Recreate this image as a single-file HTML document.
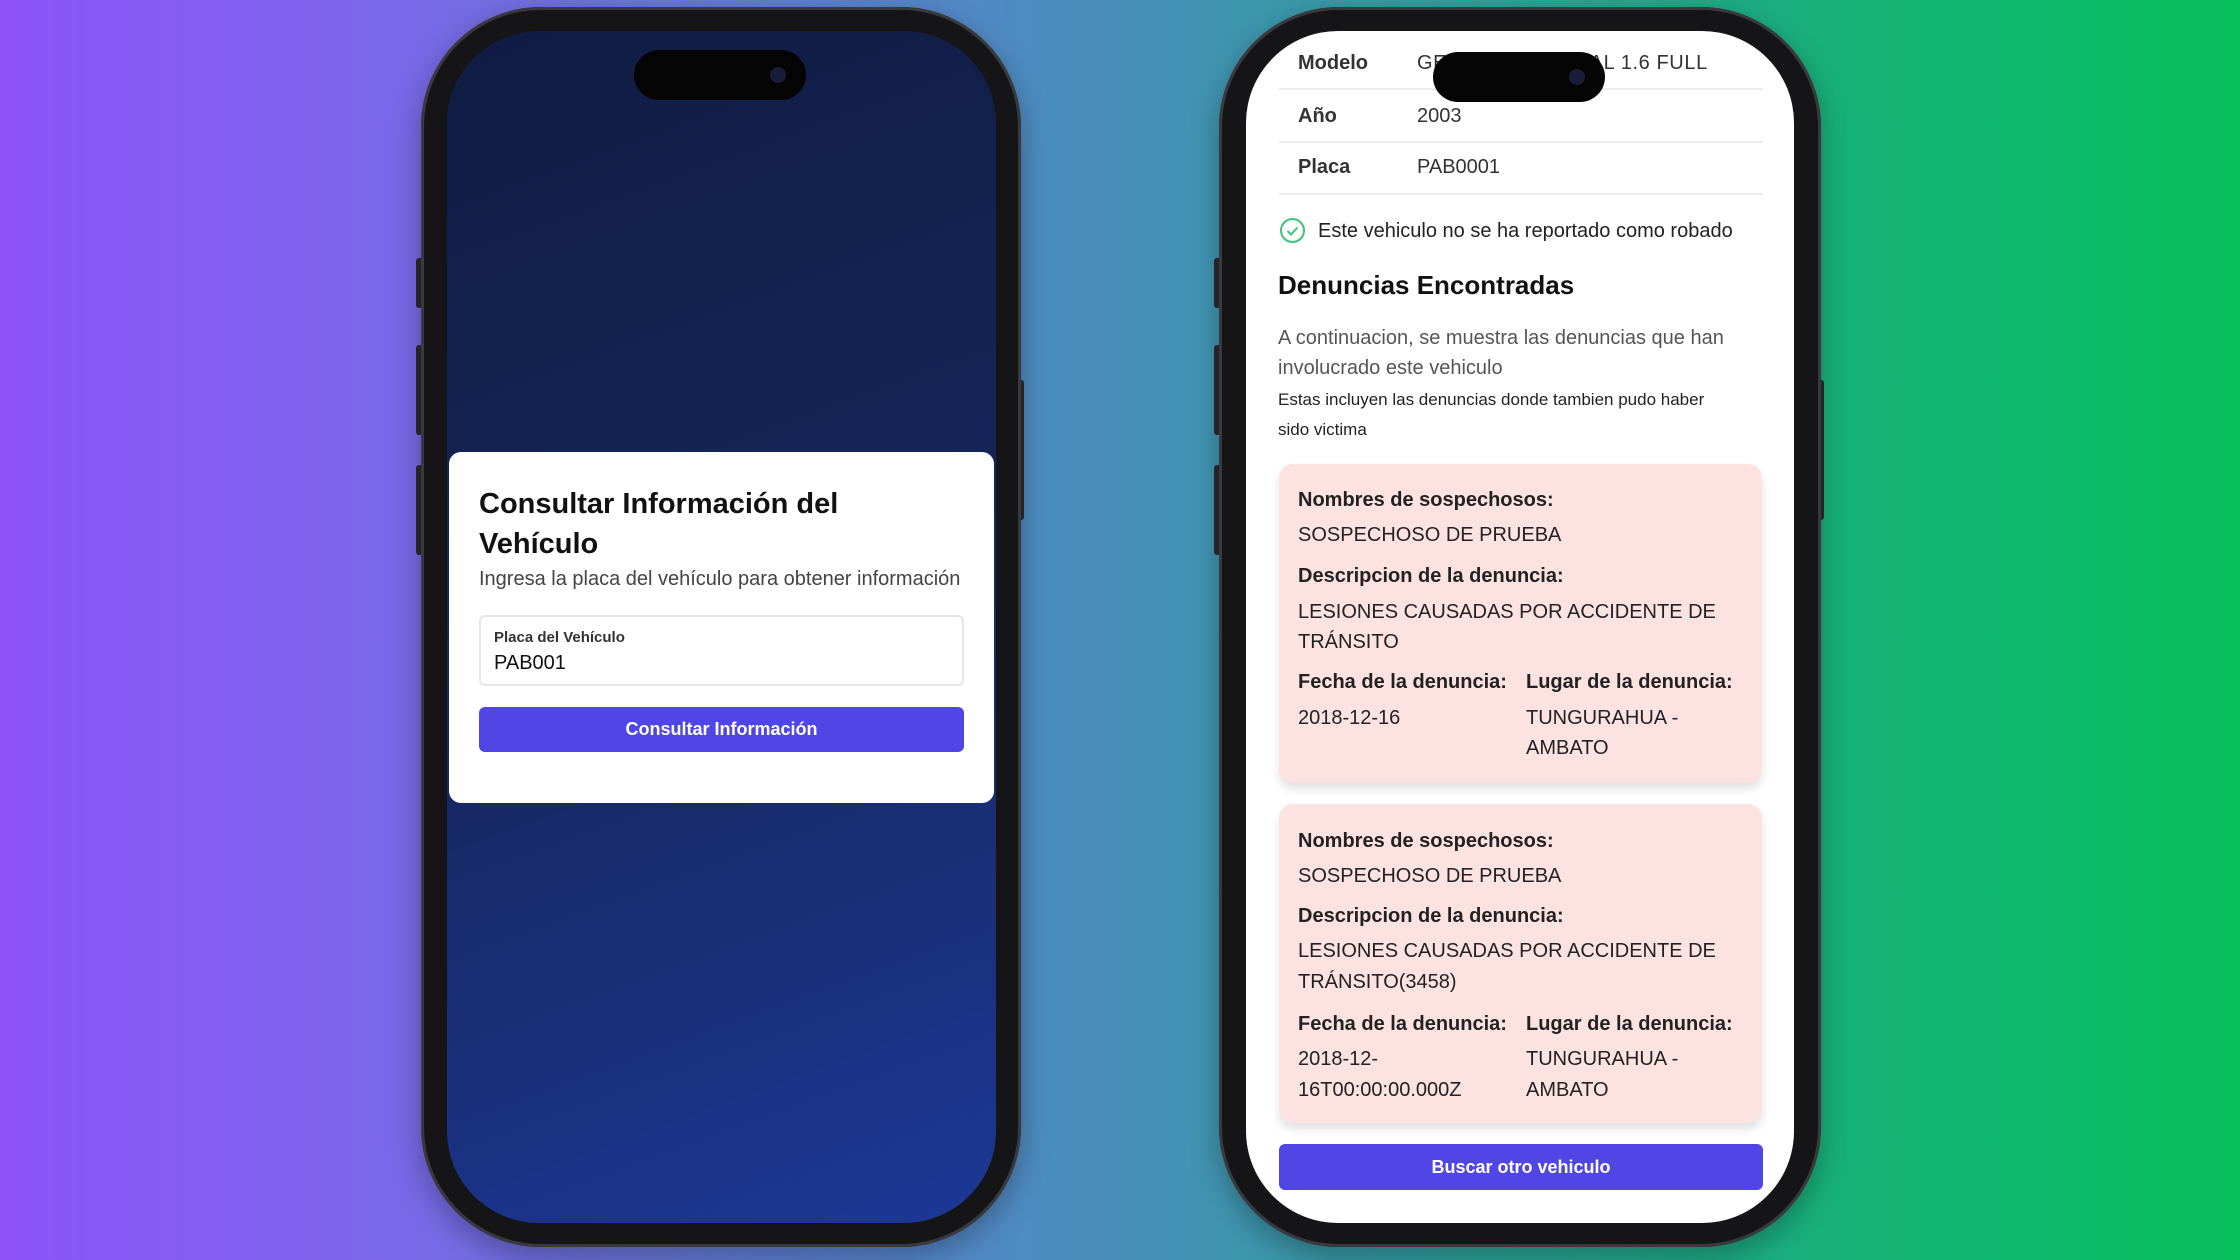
<!DOCTYPE html>
<html><head><meta charset="utf-8"><style>
*{margin:0;padding:0;box-sizing:border-box}
body{width:2240px;height:1260px;overflow:hidden;position:relative;font-family:"Liberation Sans",Arial,sans-serif;
background:linear-gradient(90deg,#8e53fb 0%,#7a68e8 18%,#5a84cf 38%,#4492b6 52%,#2aa496 68%,#14b474 85%,#07bf5c 100%)}
.a{position:absolute;white-space:nowrap}
.phone{position:absolute;border-radius:120px;background:#151517;box-shadow:0 0 0 3px #3a3a3e inset,0 10px 30px rgba(0,0,0,.3)}
.scr{position:absolute;border-radius:92px;overflow:hidden}
.island{position:absolute;width:172px;height:50px;border-radius:25px;background:#050505}
.island i{position:absolute;right:20px;top:17px;width:16px;height:16px;border-radius:50%;background:#1a1d3a}
.btn{position:absolute;background:#4f46e5;color:#fff;font-weight:bold;text-align:center;border-radius:6px}
.lab{font-weight:bold;color:#222;font-size:20px}
.val{color:#222;font-size:20px}
.card{position:absolute;left:1279px;width:483px;background:#fde2e2;border-radius:14px;box-shadow:0 6px 10px rgba(0,0,0,.12)}
.sep{position:absolute;left:1279px;width:484px;height:2px;background:#ececec}
.side{position:absolute;width:7px;background:#2a2a2c;border-radius:3px}
</style></head><body>

<!-- left phone -->
<div class="side" style="left:416px;top:258px;height:50px"></div>
<div class="side" style="left:416px;top:345px;height:90px"></div>
<div class="side" style="left:416px;top:465px;height:90px"></div>
<div class="side" style="left:1017px;top:380px;height:140px"></div>
<div class="phone" style="left:421px;top:7px;width:600px;height:1240px"></div>
<div class="scr" style="left:447px;top:31px;width:549px;height:1192px;background:linear-gradient(160deg,#101c42 0%,#152559 45%,#1d3896 100%)"></div>
<div class="island" style="left:634px;top:50px"><i></i></div>

<div class="a" style="left:449px;top:452px;width:545px;height:351px;background:#fff;border-radius:12px"></div>
<div class="a" style="left:479px;top:484px;font-size:29px;font-weight:bold;color:#111;line-height:40px">Consultar Información del<br>Vehículo</div>
<div class="a" style="left:479px;top:568px;font-size:20px;color:#444">Ingresa la placa del vehículo para obtener información</div>
<div class="a" style="left:479px;top:615px;width:485px;height:71px;border:2px solid #e6e6e6;border-radius:6px"></div>
<div class="a" style="left:494px;top:629px;font-size:15px;font-weight:bold;color:#333">Placa del Vehículo</div>
<div class="a" style="left:494px;top:652px;font-size:20px;color:#111">PAB001</div>
<div class="btn" style="left:479px;top:707px;width:485px;height:45px;line-height:45px;font-size:18px">Consultar Información</div>

<!-- right phone -->
<div class="side" style="left:1214px;top:258px;height:50px"></div>
<div class="side" style="left:1214px;top:345px;height:90px"></div>
<div class="side" style="left:1214px;top:465px;height:90px"></div>
<div class="side" style="left:1817px;top:380px;height:140px"></div>
<div class="phone" style="left:1219px;top:7px;width:602px;height:1240px"></div>
<div class="scr" style="left:1246px;top:31px;width:548px;height:1192px;background:#fff"></div>

<div class="a lab" style="left:1298px;top:52px;color:#333">Modelo</div>
<div class="a val" style="left:1417px;top:52px;color:#333;letter-spacing:0.6px">GENERAL CORDIAL 1.6 FULL</div>
<div class="sep" style="top:88px"></div>
<div class="a lab" style="left:1298px;top:105px;color:#333">Año</div>
<div class="a val" style="left:1417px;top:105px;color:#333">2003</div>
<div class="sep" style="top:141px"></div>
<div class="a lab" style="left:1298px;top:156px;color:#333">Placa</div>
<div class="a val" style="left:1417px;top:156px;color:#333">PAB0001</div>
<div class="sep" style="top:193px"></div>
<div class="island" style="left:1433px;top:52px"><i></i></div>

<svg class="a" style="left:1279px;top:217px" width="27" height="27" viewBox="0 0 27 27"><circle cx="13.5" cy="13.5" r="11.5" fill="none" stroke="#3cc47a" stroke-width="2"/><path d="M8.5 14l3.5 3.5 6.5-7" fill="none" stroke="#3cc47a" stroke-width="2"/></svg>
<div class="a" style="left:1318px;top:220px;font-size:20px;color:#222">Este vehiculo no se ha reportado como robado</div>
<div class="a" style="left:1278px;top:270px;font-size:26px;font-weight:bold;color:#111">Denuncias Encontradas</div>
<div class="a" style="left:1278px;top:323px;font-size:20px;color:#555;line-height:30px">A continuacion, se muestra las denuncias que han<br>involucrado este vehiculo</div>
<div class="a" style="left:1278px;top:385px;font-size:17px;color:#222;line-height:30px">Estas incluyen las denuncias donde tambien pudo haber<br>sido victima</div>

<div class="card" style="top:464px;height:319px"></div>
<div class="a lab" style="left:1298px;top:489px">Nombres de sospechosos:</div>
<div class="a val" style="left:1298px;top:524px">SOSPECHOSO DE PRUEBA</div>
<div class="a lab" style="left:1298px;top:565px">Descripcion de la denuncia:</div>
<div class="a val" style="left:1298px;top:597px;line-height:30px">LESIONES CAUSADAS POR ACCIDENTE DE<br>TRÁNSITO</div>
<div class="a lab" style="left:1298px;top:671px">Fecha de la denuncia:</div>
<div class="a lab" style="left:1526px;top:671px">Lugar de la denuncia:</div>
<div class="a val" style="left:1298px;top:707px">2018-12-16</div>
<div class="a val" style="left:1526px;top:703px;line-height:30px">TUNGURAHUA -<br>AMBATO</div>

<div class="card" style="top:804px;height:319px"></div>
<div class="a lab" style="left:1298px;top:830px">Nombres de sospechosos:</div>
<div class="a val" style="left:1298px;top:865px">SOSPECHOSO DE PRUEBA</div>
<div class="a lab" style="left:1298px;top:905px">Descripcion de la denuncia:</div>
<div class="a val" style="left:1298px;top:936px;line-height:31px">LESIONES CAUSADAS POR ACCIDENTE DE<br>TRÁNSITO(3458)</div>
<div class="a lab" style="left:1298px;top:1013px">Fecha de la denuncia:</div>
<div class="a lab" style="left:1526px;top:1013px">Lugar de la denuncia:</div>
<div class="a val" style="left:1298px;top:1044px;line-height:31px">2018-12-<br>16T00:00:00.000Z</div>
<div class="a val" style="left:1526px;top:1044px;line-height:31px">TUNGURAHUA -<br>AMBATO</div>

<div class="btn" style="left:1279px;top:1144px;width:484px;height:46px;line-height:46px;font-size:18px">Buscar otro vehiculo</div>
</body></html>
